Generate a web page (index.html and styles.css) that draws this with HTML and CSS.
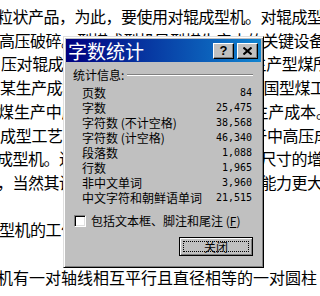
FILE: index.html
```html
<!DOCTYPE html>
<html lang="zh-CN">
<head>
<meta charset="utf-8">
<title>字数统计</title>
<link rel="stylesheet" href="styles.css">
</head>
<body>
<div class="doc">
  <div class="ln">粒状产品，为此，要使用对辊成型机。对辊成型机</div>
  <div class="ln l2">高压破碎。型煤成型机是型煤生产中的关键设备</div>
  <div class="ln l3">压对辊成型机具有结构简单、适合于生产型煤所</div>
  <div class="ln l4">某生产成本较低，是目前广泛应用于我国型煤工业</div>
  <div class="ln l5">煤生产中应用最广泛的设备，可降低生产成本。</div>
  <div class="ln l6">成型工艺简单，设备投资较少，适用于中高压成型</div>
  <div class="ln">成型机。近年来，随着对辊成型机辊子尺寸的增大</div>
  <div class="ln">，当然其设备投资也相应增加，但生产能力更大</div>
  <div class="ln blank"></div>
  <div class="ln l2">型机的工作原理</div>
  <div class="ln blank"></div>
  <div class="ln lz">机有一对轴线相互平行且直径相等的一对圆柱</div>
</div>

<div class="dialog">
  <div class="titlebar">
    <span class="title">字数统计</span>
    <div class="tbtns">
      <span class="tbtn help">?</span>
      <span class="tbtn">
        <svg width="9" height="8" viewBox="0 0 9 8"><path d="M0.5 0.5 L8.5 7.5 M8.5 0.5 L0.5 7.5" stroke="#000" stroke-width="2" fill="none"/></svg>
      </span>
    </div>
  </div>
  <div class="dbody">
    <div class="group"><span>统计信息:</span><span class="sep"></span></div>
    <div class="rows">
      <div class="row"><span>页数</span><span class="num">84</span></div>
      <div class="row"><span>字数</span><span class="num">25,475</span></div>
      <div class="row"><span>字符数 (不计空格)</span><span class="num">38,568</span></div>
      <div class="row"><span>字符数 (计空格)</span><span class="num">46,340</span></div>
      <div class="row"><span>段落数</span><span class="num">1,088</span></div>
      <div class="row"><span>行数</span><span class="num">1,965</span></div>
      <div class="row"><span>非中文单词</span><span class="num">3,960</span></div>
      <div class="row"><span>中文字符和朝鲜语单词</span><span class="num">21,515</span></div>
    </div>
    <div class="chk"><span class="box"></span><span>包括文本框、脚注和尾注 (<u>F</u>)</span></div>
    <div class="actions"><span class="btn"><span class="focus">关闭</span></span></div>
  </div>
</div>
</body>
</html>
```

FILE: styles.css
```css
html, body {
  margin: 0;
  padding: 0;
  background: #fff;
}
body {
  width: 320px;
  height: 296px;
  overflow: hidden;
  position: relative;
}
.doc {
  padding-top: 5px;
  margin-left: -3px;
  font-family: "Noto Sans CJK SC", sans-serif;
  font-size: 16px;
  line-height: 23.7px;
  letter-spacing: -0.5px;
  white-space: nowrap;
  color: #000;
}
.ln.blank {
  height: 23.7px;
}
.l2 { margin-left: 2px; }
.l3 { margin-left: 4px; letter-spacing: -0.4px; }
.l4 { margin-left: 3px; }
.l5 { margin-left: 1px; letter-spacing: -0.1px; }
.l6 { margin-left: 3px; letter-spacing: -0.3px; }
.lz { letter-spacing: 0; }

.dialog {
  position: absolute;
  left: 63px;
  top: 36px;
  width: 201px;
  height: 232px;
  box-sizing: border-box;
  background: #c0c0c0;
  border: 1px solid;
  border-color: #dfdfdf #000 #000 #dfdfdf;
  box-shadow: inset 1px 1px #fff, inset -1px -1px #808080;
  padding: 2px;
  font-family: "Noto Sans CJK SC", sans-serif;
  font-size: 12px;
  color: #000;
}
.titlebar {
  height: 23px;
  display: flex;
  align-items: center;
  justify-content: space-between;
  padding: 0 3px 0 2px;
  background: linear-gradient(to right, #000080, #1084d0);
}
.title {
  color: #fff;
  font-size: 19px;
  line-height: 23px;
}
.tbtns {
  display: flex;
  gap: 3px;
}
.tbtn {
  width: 21px;
  height: 16px;
  box-sizing: border-box;
  background: #c0c0c0;
  border: 1px solid;
  border-color: #fff #000 #000 #fff;
  box-shadow: inset -1px -1px #808080;
  display: flex;
  align-items: center;
  justify-content: center;
}
.tbtn.help {
  font-family: "Liberation Sans", sans-serif;
  font-weight: bold;
  font-size: 13px;
  line-height: 1;
}
.dbody {
  padding: 5px 8px 0 7px;
}
.group {
  height: 15px;
  display: flex;
  align-items: center;
  gap: 3px;
}
.sep {
  flex: 1;
  height: 0;
  border-top: 1px solid #808080;
  border-bottom: 1px solid #fff;
}
.rows {
  margin-top: 3px;
  padding: 0 1px 0 9px;
}
.row {
  height: 15px;
  display: flex;
  align-items: center;
  justify-content: space-between;
}
.num {
  font-family: "DejaVu Sans Mono", monospace;
  font-size: 10px;
}
.chk {
  margin-top: 8px;
  height: 15px;
  display: flex;
  align-items: center;
  gap: 5px;
  padding-left: 1px;
}
.box {
  width: 12px;
  height: 12px;
  box-sizing: border-box;
  background: #fff;
  border: 1px solid;
  border-color: #808080 #fff #fff #808080;
  box-shadow: inset 1px 1px #000, inset -1px -1px #dfdfdf;
}
.actions {
  margin-top: 9px;
  display: flex;
  justify-content: flex-end;
}
.btn {
  width: 74px;
  height: 19px;
  box-sizing: border-box;
  border: 1px solid #000;
  box-shadow: inset 1px 1px #fff, inset -1px -1px #808080;
  padding: 3px;
  display: flex;
}
.focus {
  flex: 1;
  border: 1px dotted #000;
  display: flex;
  align-items: center;
  justify-content: center;
  line-height: 1;
}
```
